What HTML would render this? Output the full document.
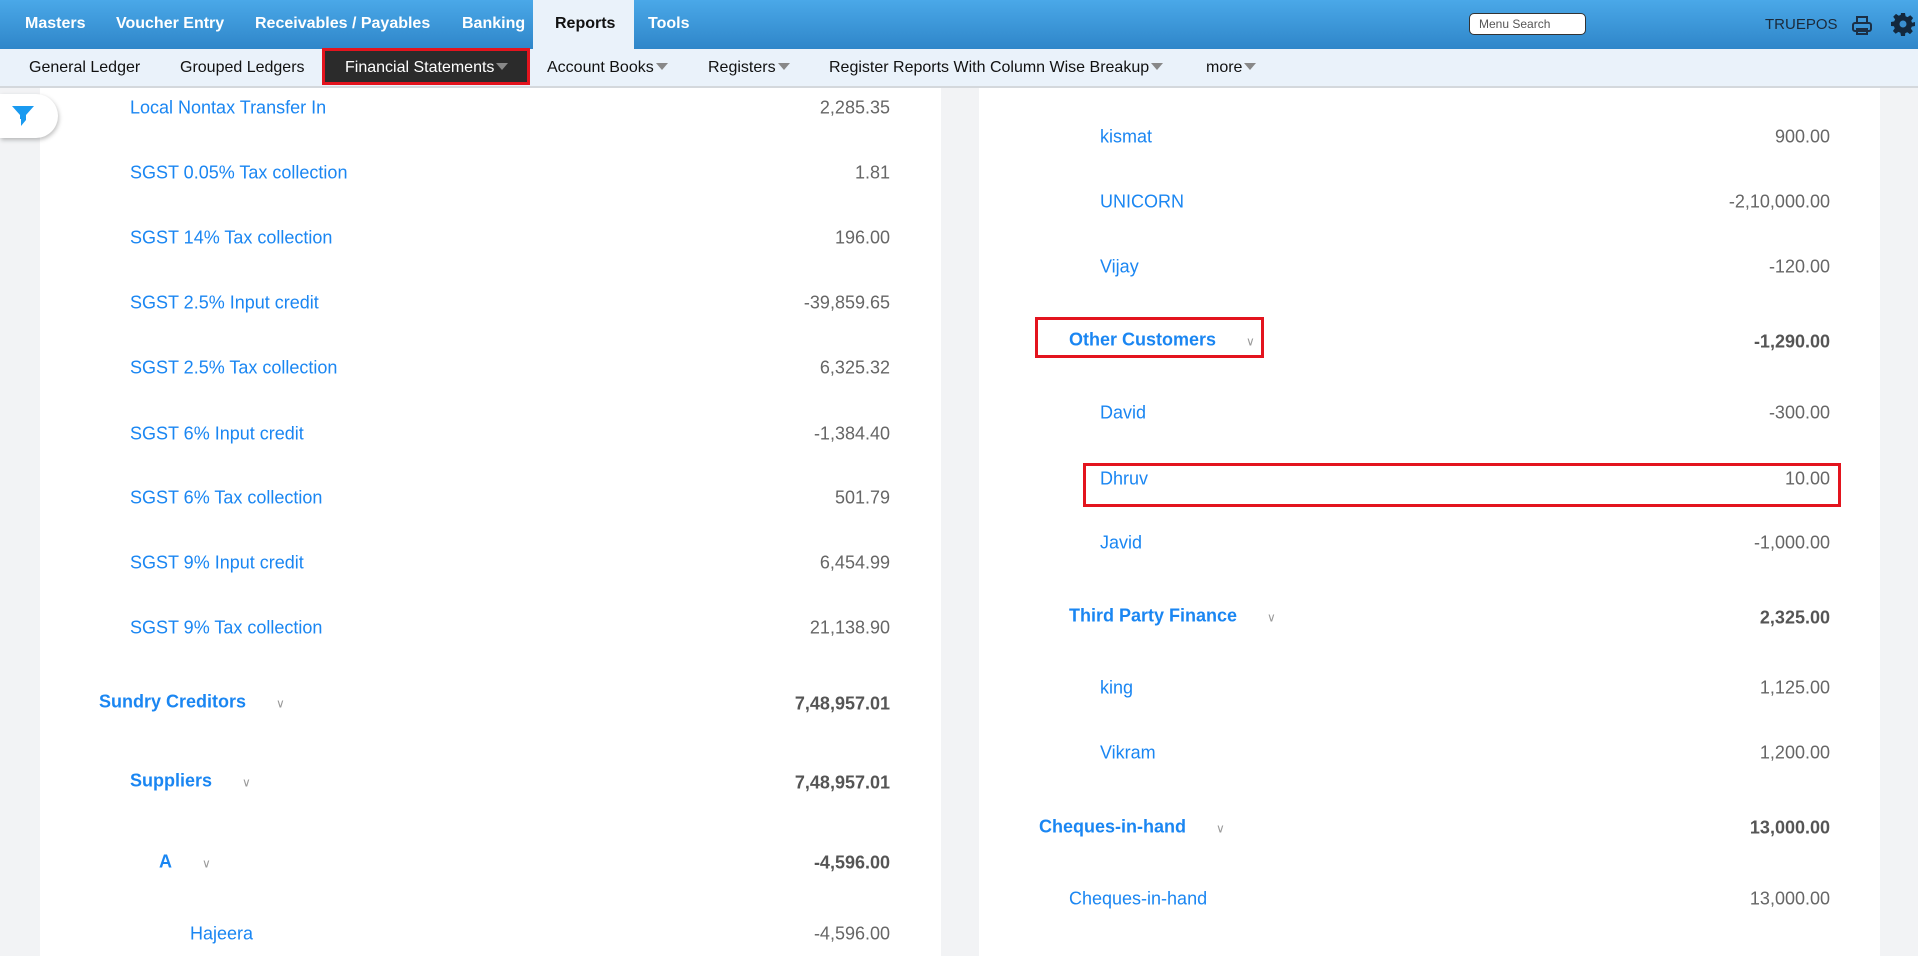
<!DOCTYPE html>
<html><head><meta charset="utf-8"><style>
*{margin:0;padding:0;box-sizing:border-box}
html,body{overflow:hidden}
body{width:1918px;height:956px;position:relative;font-family:"Liberation Sans",Arial,sans-serif;background:#f2f3f5}
.top{position:absolute;left:0;top:0;width:1918px;height:49px;background:linear-gradient(#4aa8e8,#2f86c9)}
.top span{position:absolute;top:15px;color:#fff;font-weight:bold;font-size:16px}
.rep{position:absolute;left:533px;top:0;width:101px;height:49px;background:#eaf2fa}
.sub{position:absolute;left:0;top:49px;width:1918px;height:39px;background:#eaf2fa;border-bottom:2px solid #d4d8dc}
.sub span{position:absolute;top:10px;font-size:16px;color:#111}
.ar{display:inline-block;width:0;height:0;border-left:6px solid transparent;border-right:6px solid transparent;border-top:7px solid #888;margin-left:2px;vertical-align:2px}
.fs{position:absolute;left:322px;top:48px;width:208px;height:37px;background:#2b2b2b;border:3px solid #e3141e;color:#fff;font-size:16px;padding:8px 0 0 20px}
.pl{position:absolute;top:88px;height:868px;background:#fff}
.t{position:absolute;font-size:18px;color:#1a86f2;transform:translateY(-50%);white-space:nowrap}
.b{font-weight:bold;font-size:18px}
.a{position:absolute;font-size:18px;color:#666;transform:translateY(-50%);text-align:right;white-space:nowrap}
.ab{font-weight:bold;color:#555}
.ch{color:#999;font-size:12px;font-weight:normal;margin-left:30px}
.box{position:absolute;border:3px solid #e3141e}
</style></head><body>
<div class="top">
<div class="rep"></div>
<span style="left:25px">Masters</span>
<span style="left:116px">Voucher Entry</span>
<span style="left:255px">Receivables / Payables</span>
<span style="left:462px">Banking</span>
<span style="left:555px;color:#111">Reports</span>
<span style="left:648px">Tools</span>
<div style="position:absolute;left:1469px;top:13px;width:117px;height:22px;background:#fff;border:1px solid #333;border-radius:5px;font-size:12px;color:#555;padding:3px 0 0 9px">Menu Search</div>
<span style="left:1765px;top:16px;font-weight:normal;color:#1b2a3a;font-size:15px">TRUEPOS</span>
<svg style="position:absolute;left:1851px;top:15px" width="22" height="22" viewBox="0 0 22 22" fill="none" stroke="#1b2f45" stroke-width="2"><rect x="6" y="2" width="10" height="6"/><rect x="2" y="8" width="18" height="8" rx="2"/><rect x="6" y="14" width="10" height="5"/></svg>
<svg style="position:absolute;left:1891px;top:12px" width="24" height="24" viewBox="0 0 24 24"><path fill="#13283d" d="M10 1h4l.6 3.2 2 .9 2.7-1.9 2.8 2.8-1.9 2.7.9 2L24 10v4l-3.2.6-.9 2 1.9 2.7-2.8 2.8-2.7-1.9-2 .9L14 24h-4l-.6-3.2-2-.9-2.7 1.9-2.8-2.8 1.9-2.7-.9-2L0 14v-4l3.2-.6.9-2L2.2 4.7 5 1.9l2.7 1.9 2-.9z"/><circle cx="12" cy="12" r="3.5" fill="#3a8fd0"/></svg>
</div>
<div class="sub">
<span style="left:29px">General Ledger</span>
<span style="left:180px">Grouped Ledgers</span>
<span style="left:547px">Account Books<i class="ar"></i></span>
<span style="left:708px">Registers<i class="ar"></i></span>
<span style="left:829px">Register Reports With Column Wise Breakup<i class="ar"></i></span>
<span style="left:1206px">more<i class="ar"></i></span>
</div>
<div class="fs">Financial Statements<i class="ar"></i></div>
<div class="pl" style="left:40px;width:901px"></div>
<div class="pl" style="left:979px;width:901px"></div>
<div style="position:absolute;left:0;top:94px;width:58px;height:44px;background:#fff;border-radius:0 22px 22px 0;box-shadow:1px 2px 4px rgba(0,0,0,.25)">
<svg style="position:absolute;left:12px;top:12px" width="22" height="22" viewBox="0 0 22 22"><path fill="#1a9af0" d="M0 0h22L14 9v4H8V9z"/><path fill="#1a9af0" d="M9 13h5v1L9 20z"/></svg></div>

<div class="t" style="left:130px;top:108px">Local Nontax Transfer In</div><div class="a" style="right:1028px;top:108px">2,285.35</div>
<div class="t" style="left:130px;top:173px">SGST 0.05% Tax collection</div><div class="a" style="right:1028px;top:173px">1.81</div>
<div class="t" style="left:130px;top:238px">SGST 14% Tax collection</div><div class="a" style="right:1028px;top:238px">196.00</div>
<div class="t" style="left:130px;top:303px">SGST 2.5% Input credit</div><div class="a" style="right:1028px;top:303px">-39,859.65</div>
<div class="t" style="left:130px;top:368px">SGST 2.5% Tax collection</div><div class="a" style="right:1028px;top:368px">6,325.32</div>
<div class="t" style="left:130px;top:434px">SGST 6% Input credit</div><div class="a" style="right:1028px;top:434px">-1,384.40</div>
<div class="t" style="left:130px;top:498px">SGST 6% Tax collection</div><div class="a" style="right:1028px;top:498px">501.79</div>
<div class="t" style="left:130px;top:563px">SGST 9% Input credit</div><div class="a" style="right:1028px;top:563px">6,454.99</div>
<div class="t" style="left:130px;top:628px">SGST 9% Tax collection</div><div class="a" style="right:1028px;top:628px">21,138.90</div>
<div class="t b" style="left:99px;top:702px">Sundry Creditors<span class="ch">&#8744;</span></div><div class="a ab" style="right:1028px;top:704px">7,48,957.01</div>
<div class="t b" style="left:130px;top:781px">Suppliers<span class="ch">&#8744;</span></div><div class="a ab" style="right:1028px;top:783px">7,48,957.01</div>
<div class="t b" style="left:159px;top:862px">A<span class="ch">&#8744;</span></div><div class="a ab" style="right:1028px;top:863px">-4,596.00</div>
<div class="t" style="left:190px;top:934px">Hajeera</div><div class="a" style="right:1028px;top:934px">-4,596.00</div>

<div class="t" style="left:1100px;top:137px">kismat</div><div class="a" style="right:88px;top:137px">900.00</div>
<div class="t" style="left:1100px;top:202px">UNICORN</div><div class="a" style="right:88px;top:202px">-2,10,000.00</div>
<div class="t" style="left:1100px;top:267px">Vijay</div><div class="a" style="right:88px;top:267px">-120.00</div>
<div class="t b" style="left:1069px;top:340px">Other Customers<span class="ch">&#8744;</span></div><div class="a ab" style="right:88px;top:342px">-1,290.00</div>
<div class="box" style="left:1035px;top:317px;width:229px;height:41px"></div>
<div class="t" style="left:1100px;top:413px">David</div><div class="a" style="right:88px;top:413px">-300.00</div>
<div class="t" style="left:1100px;top:479px">Dhruv</div><div class="a" style="right:88px;top:479px">10.00</div>
<div class="box" style="left:1083px;top:463px;width:758px;height:44px"></div>
<div class="t" style="left:1100px;top:543px">Javid</div><div class="a" style="right:88px;top:543px">-1,000.00</div>
<div class="t b" style="left:1069px;top:616px">Third Party Finance<span class="ch">&#8744;</span></div><div class="a ab" style="right:88px;top:618px">2,325.00</div>
<div class="t" style="left:1100px;top:688px">king</div><div class="a" style="right:88px;top:688px">1,125.00</div>
<div class="t" style="left:1100px;top:753px">Vikram</div><div class="a" style="right:88px;top:753px">1,200.00</div>
<div class="t b" style="left:1039px;top:827px">Cheques-in-hand<span class="ch">&#8744;</span></div><div class="a ab" style="right:88px;top:828px">13,000.00</div>
<div class="t" style="left:1069px;top:899px">Cheques-in-hand</div><div class="a" style="right:88px;top:899px">13,000.00</div>
<div class="t" style="left:1039px;top:970px;color:#444">Credit Card Total</div><div class="a" style="right:88px;top:970px">00,000.00</div>
</body></html>
